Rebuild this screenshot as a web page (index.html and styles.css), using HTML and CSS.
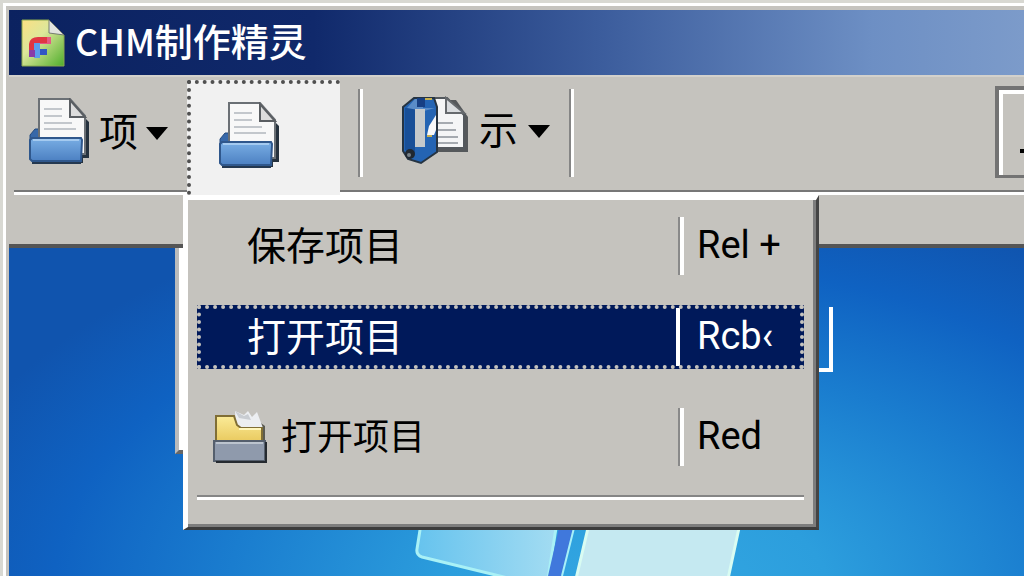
FILE: index.html
```html
<!DOCTYPE html>
<html lang="zh-CN">
<head>
<meta charset="utf-8">
<title>CHM制作精灵</title>
<link rel="stylesheet" href="styles.css">
</head>
<body>
<svg class="defs" aria-hidden="true">
  <defs>
    <linearGradient id="tray" x2="0" y2="1"><stop offset="0" stop-color="#79aee4"/><stop offset="1" stop-color="#4c80c2"/></linearGradient>
    <linearGradient id="sheet" x2="1" y2="1"><stop offset="0" stop-color="#fbdf83"/><stop offset=".4" stop-color="#dce79a"/><stop offset="1" stop-color="#4fae2c"/></linearGradient>
    <linearGradient id="folder" x2="0" y2="1"><stop offset="0" stop-color="#fbeb98"/><stop offset="1" stop-color="#e8c85c"/></linearGradient>
    <linearGradient id="pane"><stop offset="0" stop-color="#66c3ee"/><stop offset="1" stop-color="#a3dcf2"/></linearGradient>
    <symbol id="doc-tray" viewBox="0 0 62 68">
      <path d="M50 14l10 10v36h-6v5H6l-3-3h47z" fill="#26323e"/>
      <path d="M1 37l5-6h6v12H1z" fill="#3768a9" stroke="#244a7e"/>
      <path d="M10 1h31l15 17v38H10z" fill="#f8f8f8" stroke="#6b7075" stroke-width="2"/>
      <path d="M41 2v17h15z" fill="#dcdcdc" stroke="#5a5e62" stroke-width="2"/>
      <path d="M15 11h18M15 18h18M15 25h28M15 31h32" stroke="#c3c7cc" stroke-width="2"/>
      <path d="M1 42l2-2h49l1 2-1 21H3L1 61z" fill="url(#tray)" stroke="#2f578c" stroke-width="2"/>
      <path d="M4 42h46" stroke="#a4caf0" stroke-width="2"/>
      <path d="M3 65h49" stroke="#243850" stroke-width="2"/>
    </symbol>
  </defs>
</svg>
<main class="window">
  <header class="titlebar">
    <svg class="app-icon" viewBox="0 0 44 48" aria-hidden="true">
      <path d="M1 1h27l15 15v31H1z" fill="url(#sheet)" stroke="#8aa84e"/>
      <path d="M28 1v13l15 2z" fill="#e2e4df" stroke="#757b70"/>
      <path d="M8 37V25q1-7 9-7h13v7H19q-4 0-4 5v7z" fill="#e03642"/>
      <path d="M17 24h9v-6h4v7H19z" fill="#e45a83"/>
      <path d="M13 24h6v7h7v5h-7v3h-6z" fill="#5d9eea"/>
      <path d="M8 31h6v7H8z" fill="#8a3ca7"/>
      <path d="M19 30h7v6h-7z" fill="#3156c4"/>
    </svg>
    <h1 class="title"><span class="title-latin">CHM</span>制作精灵</h1>
  </header>
  <div class="toolbar">
    <button class="tool tool-project" type="button">
      <svg class="tray-icon" aria-hidden="true"><use href="#doc-tray"/></svg>
      <span>项</span><span class="caret"></span>
    </button>
    <button class="tool tool-open" type="button" aria-label="打开项目" aria-expanded="true">
      <svg class="tray-icon" aria-hidden="true"><use href="#doc-tray"/></svg>
    </button>
    <span class="divider"></span>
    <button class="tool tool-show" type="button">
      <svg class="book-icon" viewBox="0 0 68 70" aria-hidden="true">
        <path d="M37 4h18l12 17v35H36z" fill="#55585b"/>
        <path d="M31 2h15l17 17v33H31z" fill="#f4f5f6" stroke="#53585d" stroke-width="2"/>
        <path d="M45 2v15h18z" fill="#d9dcdf" stroke="#65696d" stroke-width="2"/>
        <path d="M37 27h15M37 34h18M37 41h20M37 47h20" stroke="#a5aab0" stroke-width="2"/>
        <path d="M2 11L13 2h20l3 9v45L20 67 7 63 2 55z" fill="#2464b3" stroke="#263442" stroke-width="2"/>
        <path d="M4 12h10v45L4 54z" fill="#184f98"/>
        <path d="M6 12L14 3h8v9h12L23 15z" fill="#5a8cc8"/>
        <path d="M16 2h8v9h-8z" fill="#173f83"/>
        <path d="M14 13h10v38H14z" fill="#c5c9cb"/>
        <path d="M35 19l-5 8-2 3-2 9h7l2-5z" fill="#f7f8fa"/>
        <path d="M24 3h7M26 40h5" stroke="#c7b051" stroke-width="2"/>
        <circle cx="9" cy="58" r="5" fill="#202831"/>
        <circle cx="8" cy="59" r="2" fill="#76818a"/>
      </svg>
      <span>示</span><span class="caret"></span>
    </button>
    <span class="divider"></span>
    <button class="tool-edge" type="button" aria-label="更多"><span class="mark"></span></button>
  </div>
  <div class="band"></div>
  <section class="desktop">
    <svg class="logo" viewBox="0 0 340 50" aria-hidden="true">
      <path d="M13 4L10 23q-1 6 5 8l90 22h36L149 2H13z" fill="url(#pane)" stroke="#a9f1f6" stroke-width="3"/>
      <path d="M152 2h14L154 50h-13z" fill="#4078dc"/>
      <path d="M167 2l-12 48" stroke="#a9eff8" stroke-width="2"/>
      <path d="M181 2h151l-11 51H169z" fill="#c5e9f1" stroke="#d9fcf2" stroke-width="3"/>
    </svg>
    <div class="back-panel"></div>
    <div class="back-box"></div>
  </section>
  <div class="menu" role="menu">
    <button class="item" type="button" role="menuitem"><span class="label">保存项目</span><span class="key">Rel +</span></button>
    <button class="item selected" type="button" role="menuitem"><span class="label">打开项目</span><span class="key">Rcb‹</span></button>
    <button class="item with-icon" type="button" role="menuitem">
      <svg class="folder-icon" viewBox="0 0 54 54" aria-hidden="true">
        <path d="M45 11l7 5v18H8z" fill="#5b5b51"/>
        <path d="M22 1l9 4 4-4 4 6 5-5 6 16H23z" fill="#eceef1"/>
        <path d="M22 1l9 5 4-2 3 6-12-2z" fill="#c9cdd2"/>
        <path d="M3 6h18l3 9 4 3h21v15H3z" fill="url(#folder)" stroke="#806e35" stroke-width="2"/>
        <path d="M26 19h22" stroke="#fff6bc" stroke-width="2"/>
        <path d="M1 31h51v20H1z" fill="#8f9aac" stroke="#555f6d" stroke-width="2"/>
        <path d="M3 33h47" stroke="#bcc4ce" stroke-width="2"/>
        <path d="M3 52h50V32" fill="none" stroke="#252a30" stroke-width="2"/>
      </svg>
      <span class="label">打开项目</span><span class="key">Red</span>
    </button>
    <div class="rule" role="separator"></div>
  </div>
</main>
</body>
</html>
```
FILE: styles.css
```css
* { box-sizing: border-box; }
html, body { height: 100%; }
body {
  margin: 0;
  overflow: hidden;
  background: #c5c3be;
  color: #000;
  font: 39px/48px "Noto Sans CJK SC", sans-serif;
}
button { margin: 0; padding: 0; border: 0; background: none; color: inherit; font: inherit; text-align: left; }
svg { display: block; flex: none; }
.defs { position: absolute; width: 0; height: 0; }

.window {
  position: relative;
  display: flex;
  flex-direction: column;
  min-height: 100%;
  padding: 10px 0 0 9px;
  background: #c5c3be;
  box-shadow: inset 3px 3px #d8d8d2, inset 6px 6px #fff;
}
.titlebar {
  display: flex;
  align-items: center;
  gap: 10px;
  height: 65px;
  padding-left: 12px;
  background: linear-gradient(90deg, #0b2260 0%, #10296b 30%, #3b5c9c 58%, #6d8fc4 85%, #7c9bca 100%);
  color: #fff;
}
.app-icon { width: 44px; height: 48px; }
.title { margin: 0; padding-bottom: 6px; font-size: 38px; font-weight: 500; line-height: 48px; }
.title-latin { font-size: 36px; }

.toolbar { display: flex; height: 115px; padding-top: 3px; border-top: 2px solid #d3d1cc; }
.tool { display: flex; flex: none; }
.tool-project { width: 178px; padding: 18px 0 0 20px; gap: 8px; }
.tool-project > span, .tool-show > span { margin-top: 7px; }
.tray-icon { width: 62px; height: 68px; }
.tool > .caret {
  width: 22px;
  height: 13px;
  margin-top: 29px;
  background: #000;
  clip-path: polygon(0 0, 100% 0, 50% 100%);
}
.tool-open {
  position: relative;
  z-index: 1;
  width: 153px;
  margin-bottom: -5px;
  padding: 18px 0 0 28px;
  border: 4px dotted #505050;
  border-width: 4px 0 0 4px;
  background: #f1f1f1;
}
.divider {
  flex: none;
  width: 5px;
  height: 88px;
  margin: 9px 0 0 18px;
  border-left: 2px solid #858585;
  border-right: 3px solid #fff;
}
.tool-show { width: 188px; padding: 16px 0 0 38px; gap: 10px; }
.tool-show + .divider { margin-left: 18px; }
.book-icon { width: 68px; height: 70px; }
.tool-edge {
  display: flex;
  justify-content: flex-end;
  width: 29px;
  height: 92px;
  margin: 6px 0 0 auto;
  border: 4px solid #737373;
  border-width: 4px 0 3px 4px;
  box-shadow: inset 4px 4px #fff;
}
.mark { width: 4px; height: 4px; margin-top: 59px; background: #000; }
.band {
  height: 58px;
  padding-left: 5px;
  border-bottom: 4px solid #555;
}
.band::before {
  content: "";
  display: block;
  border-top: 2px solid #777;
  border-bottom: 3px solid #fff;
}
.desktop {
  position: relative;
  flex: 1;
  overflow: hidden;
  background: radial-gradient(ellipse 72% 125% at 62% 105%, #34a8e2 0%, #2c9edd 26%, #1a7dcf 56%, #0f62c2 80%, #1054ae 100%);
}
.back-panel {
  position: absolute;
  top: 0;
  left: 166px;
  width: 12px;
  height: 206px;
  border-left: 4px solid #bbb;
  border-bottom: 4px solid #666;
  background: #fff;
}
.back-box {
  position: absolute;
  top: 59px;
  left: 806px;
  width: 18px;
  height: 65px;
  border: 4px solid #fff;
  border-width: 0 4px 4px 0;
}
.logo { position: absolute; bottom: 0; left: 398px; width: 340px; height: 50px; }

.menu {
  position: absolute;
  z-index: 2;
  top: 195px;
  left: 183px;
  display: flex;
  flex-direction: column;
  width: 636px;
  padding: 14px 12px 27px 9px;
  border: solid;
  border-width: 5px 3px 3px 5px;
  border-color: #fff #444 #3c3c3c #fff;
  box-shadow: inset -3px -3px #7d7d7d;
  background: #c5c3be;
}
.item {
  display: flex;
  align-items: center;
  width: 100%;
  height: 64px;
  padding: 0 0 0 50px;
}
.label { flex: 1; padding-bottom: 7px; }
.key {
  width: 124px;
  height: 58px;
  padding-left: 13px;
  border-left: 4px solid #fff;
  box-shadow: -2px 0 #898989;
  font: 38px/56px Roboto, "Liberation Sans", sans-serif;
  white-space: pre;
}
.selected {
  margin: 27px 0 36px;
  background: #00195a;
  outline: 4px dotted #c5c3be;
  outline-offset: -4px;
  color: #fff;
}
.selected .key { width: 128px; padding-left: 17px; box-shadow: none; }
.with-icon { gap: 14px; padding-left: 16px; }
.with-icon .label { font-size: 36px; }
.folder-icon { width: 54px; height: 54px; }
.rule { height: 5px; margin-top: 26px; border-top: 2px solid #858585; border-bottom: 3px solid #fff; }
```
